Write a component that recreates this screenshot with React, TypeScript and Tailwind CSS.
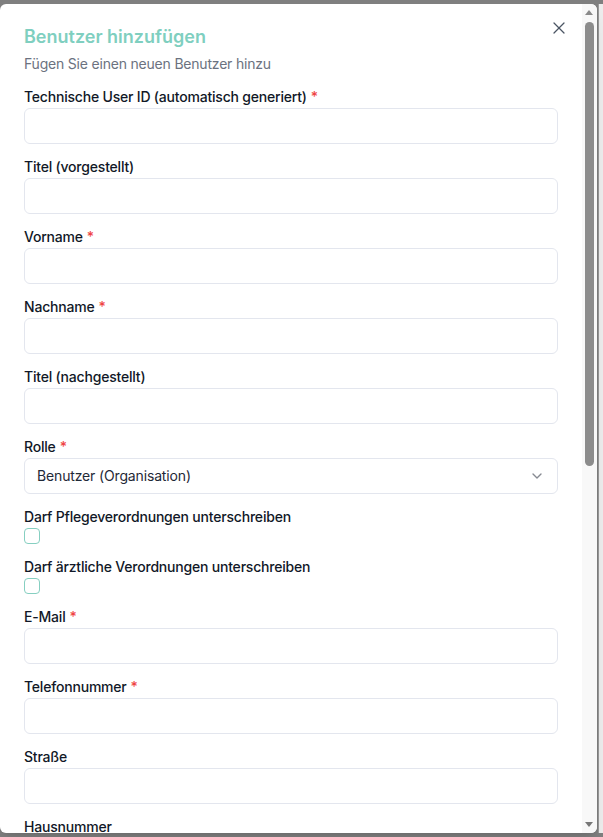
import React from "react";
import { X, ChevronDown } from "lucide-react";

type Field = { label: string; required?: boolean; kind: "input" | "select" | "checkbox"; value?: string };

const fields: Field[] = [
  { label: "Technische User ID (automatisch generiert)", required: true, kind: "input" },
  { label: "Titel (vorgestellt)", kind: "input" },
  { label: "Vorname", required: true, kind: "input" },
  { label: "Nachname", required: true, kind: "input" },
  { label: "Titel (nachgestellt)", kind: "input" },
  { label: "Rolle", required: true, kind: "select", value: "Benutzer (Organisation)" },
  { label: "Darf Pflegeverordnungen unterschreiben", kind: "checkbox" },
  { label: "Darf ärztliche Verordnungen unterschreiben", kind: "checkbox" },
  { label: "E-Mail", required: true, kind: "input" },
  { label: "Telefonnummer", required: true, kind: "input" },
  { label: "Straße", kind: "input" },
  { label: "Hausnummer", kind: "input" },
];

function FieldRow({ f }: { f: Field }) {
  return (
    <div className="flex flex-col">
      <label className="h-5 text-sm leading-5 font-medium tracking-[-0.2px] text-[#111827]">
        {f.label}
        {f.required && <span className="ml-1 text-[#ef4444]">*</span>}
      </label>
      {f.kind === "input" && (
        <div className="mt-px h-9 w-full rounded-md border border-[#e3e6ee] bg-white" />
      )}
      {f.kind === "select" && (
        <div className="mt-px flex h-9 w-full items-center justify-between rounded-md border border-[#e3e6ee] bg-white px-3">
          <span className="text-sm tracking-[-0.15px] text-[#1f2937]">{f.value}</span>
          <ChevronDown className="h-4 w-4 text-[#111827] opacity-50" />
        </div>
      )}
      {f.kind === "checkbox" && (
        <div className="mt-px h-4 w-4 rounded-[4px] border border-[#86cfc1] bg-white" />
      )}
    </div>
  );
}

export default function App() {
  return (
    <div
      className="relative h-[837px] w-[603px] overflow-hidden bg-[#7f7f7f]"
      style={{ fontFamily: "Inter, 'Noto Sans', sans-serif" }}
    >
      {/* page behind the overlay, visible at right edge */}
      <div className="absolute left-[598px] top-[4px] h-[829px] w-[5px] border-l border-[#9a9a9a] bg-[#ededed]" />

      {/* dialog */}
      <div className="absolute left-0 top-[4px] flex h-[829px] w-[597px] overflow-hidden rounded-md bg-white shadow-lg">
        <div className="relative flex-1 overflow-hidden px-6 pt-6">
          <h2 className="text-lg leading-none font-semibold text-[#7fcfc0]">
            Benutzer hinzufügen
          </h2>
          <p className="mt-2 text-sm leading-5 tracking-[-0.2px] text-[#6b7280]">
            Fügen Sie einen neuen Benutzer hinzu
          </p>
          <div className="mt-[13px] flex flex-col gap-[13px]">
            {fields.map((f) => (
              <FieldRow key={f.label} f={f} />
            ))}
          </div>
          <button className="absolute right-[13px] top-[14px] text-[#4b5563]">
            <X size={20} strokeWidth={1.5} />
          </button>
        </div>
        {/* scrollbar */}
        <div className="relative w-[15px] bg-[#f8f8f8]">
          <div className="absolute left-[3px] top-[6px] h-0 w-0 border-x-[4px] border-b-[5px] border-x-transparent border-b-[#8a8a8a]" />
          <div className="absolute left-[3px] top-[18px] h-[444px] w-[9px] rounded-full bg-[#8c8c8c]" />
          <div className="absolute bottom-[6px] left-[3px] h-0 w-0 border-x-[4px] border-t-[5px] border-x-transparent border-t-[#777777]" />
        </div>
      </div>
    </div>
  );
}
